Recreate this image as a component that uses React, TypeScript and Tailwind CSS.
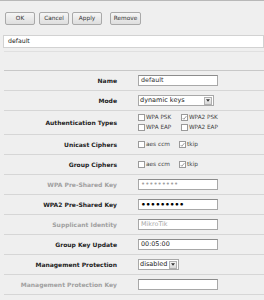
import React from "react";

function Btn({ label, className = "" }: { label: string; className?: string }) {
  return (
    <button
      className={`h-[13px] w-[30px] rounded-[2px] border border-[#a9a9a9] bg-gradient-to-b from-[#f6f6f6] to-[#dedede] text-[5.8px] leading-none text-[#333] ${className}`}
    >
      {label}
    </button>
  );
}

function Box({ checked = false }: { checked?: boolean }) {
  return (
    <span className="relative flex h-[7px] w-[7px] items-center justify-center border border-[#9a9a9a] bg-white">
      {checked && (
        <svg viewBox="0 0 8 8" className="h-[6px] w-[6px]">
          <path d="M1 4 L3 6 L7 1" fill="none" stroke="#555" strokeWidth="0.9" />
        </svg>
      )}
    </span>
  );
}

function Check({ label, checked = false, caps = false }: { label: string; checked?: boolean; caps?: boolean }) {
  return (
    <span className="flex items-center gap-[1px]">
      <Box checked={checked} />
      <span className={`${caps ? "text-[5.7px]" : "text-[5.8px]"} whitespace-nowrap leading-none text-[#444]`}>{label}</span>
    </span>
  );
}

function Input({ value = "", className = "" }: { value?: string; className?: string }) {
  return (
    <div
      className={`flex h-[11px] w-[80px] items-center overflow-hidden border border-[#a8a8a8] border-t-[#8c8c8c] bg-white px-[2px] leading-none ${className}`}
    >
      {value}
    </div>
  );
}

function Select({ value, width }: { value: string; width: string }) {
  return (
    <div className={`flex h-[11px] items-center border border-[#a8a8a8] bg-white ${width}`}>
      <span className="flex-1 whitespace-nowrap px-[1px] text-[6.5px] leading-none text-[#222]">{value}</span>
      <span className="mr-[1px] flex h-[8px] w-[8px] shrink-0 items-center justify-center border border-[#b0b0b0] bg-gradient-to-b from-[#f4f4f4] to-[#d8d8d8]">
        <svg viewBox="0 0 6 4" className="h-[3px] w-[4px]">
          <path d="M0 0 L6 0 L3 4 Z" fill="#333" />
        </svg>
      </span>
    </div>
  );
}

function Row({
  label,
  dim = false,
  tall = false,
  children,
}: {
  label: string;
  dim?: boolean;
  tall?: boolean;
  children: React.ReactNode;
}) {
  return (
    <div className={`flex items-center border-b border-[#d6d6d6] ${tall ? "h-[24px]" : "h-[20px]"}`}>
      <div className={`w-[113px] whitespace-nowrap text-right text-[6px] font-bold leading-none ${dim ? "text-[#a0a0a0]" : "text-[#222]"}`}>
        {label}
      </div>
      <div className="ml-[21px] flex flex-col justify-center gap-[3px]">{children}</div>
    </div>
  );
}

export default function App() {
  return (
    <div className="h-[300px] w-[264px] overflow-hidden border-t border-[#b8b8b8] bg-[#efefef] font-['DejaVu_Sans',sans-serif]">
      <div className="flex pl-[5px] pt-[11px]">
        <Btn label="OK" />
        <Btn label="Cancel" className="ml-[4px]" />
        <Btn label="Apply" className="ml-[3px]" />
        <Btn label="Remove" className="ml-[8px] w-[31px]" />
      </div>
      <div className="ml-[3px] mt-[10px] flex h-[13px] items-center border border-[#d2d2d2] bg-white pl-[4px] text-[6.2px] leading-none text-[#222]">
        default
      </div>
      <div className="ml-[4px] mt-[3px] border-b border-[#e0e0e0]" />
      <div className="ml-[4px] mt-[18px] border-t border-[#c8c8c8]">
        <Row label="Name">
          <Input value="default" className="text-[6.4px] text-[#333]" />
        </Row>
        <Row label="Mode">
          <Select value="dynamic keys" width="w-[76px]" />
        </Row>
        <Row label="Authentication Types" tall>
          <div className="flex">
            <div className="w-[43px]">
              <Check label="WPA PSK" caps />
            </div>
            <Check label="WPA2 PSK" caps checked />
          </div>
          <div className="flex">
            <div className="w-[43px]">
              <Check label="WPA EAP" caps />
            </div>
            <Check label="WPA2 EAP" caps />
          </div>
        </Row>
        <Row label="Unicast Ciphers">
          <div className="flex">
            <div className="w-[41px]">
              <Check label="aes ccm" />
            </div>
            <Check label="tkip" checked />
          </div>
        </Row>
        <Row label="Group Ciphers">
          <div className="flex">
            <div className="w-[41px]">
              <Check label="aes ccm" />
            </div>
            <Check label="tkip" checked />
          </div>
        </Row>
        <Row label="WPA Pre-Shared Key" dim>
          <Input value="•••••••••" className="text-[7px] text-[#a0a0a0]" />
        </Row>
        <Row label="WPA2 Pre-Shared Key">
          <Input value="•••••••••" className="text-[7.5px] font-bold text-black" />
        </Row>
        <Row label="Supplicant Identity" dim>
          <Input value="MikroTik" className="text-[6.4px] text-[#a8a8a8]" />
        </Row>
        <Row label="Group Key Update">
          <Input value="00:05:00" className="text-[6.4px] text-[#222]" />
        </Row>
        <Row label="Management Protection">
          <Select value="disabled" width="w-[41px]" />
        </Row>
        <Row label="Management Protection Key" dim>
          <Input />
        </Row>
      </div>
    </div>
  );
}
